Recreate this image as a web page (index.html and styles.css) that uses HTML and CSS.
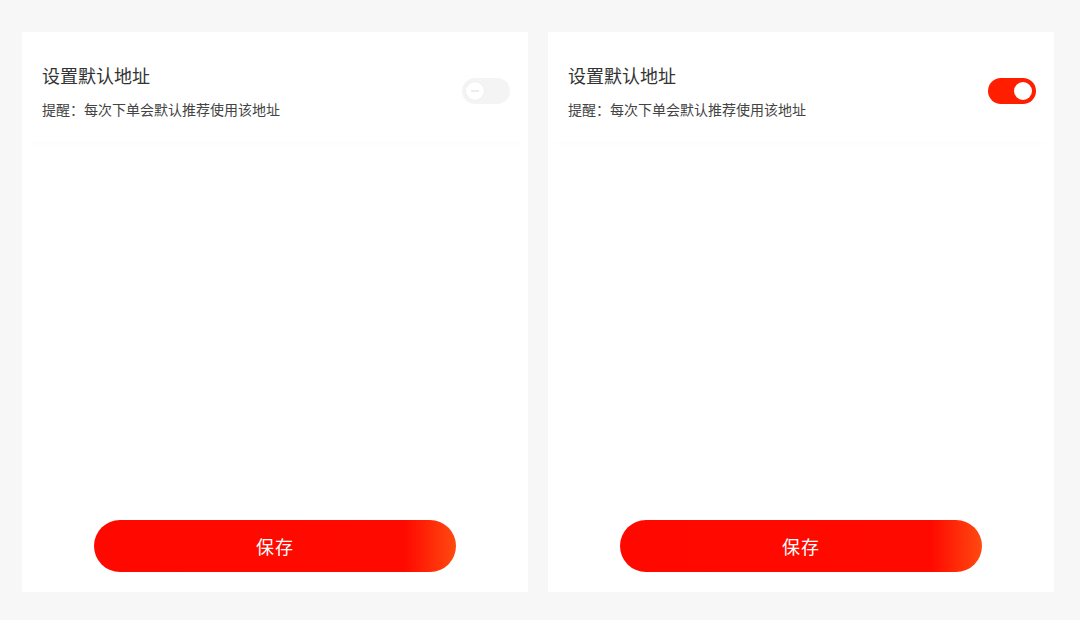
FILE: index.html
```html
<!DOCTYPE html>
<html lang="zh-CN">
<head>
<meta charset="utf-8">
<title>设置默认地址</title>
<link rel="stylesheet" href="styles.css">
</head>
<body>
  <main class="stage">
    <section class="panel">
      <div class="setting">
        <div class="setting-text">
          <h2 class="setting-title">设置默认地址</h2>
          <p class="setting-hint">提醒：每次下单会默认推荐使用该地址</p>
        </div>
        <span class="switch" role="switch" aria-checked="false"><span class="knob"></span></span>
      </div>
      <div class="spacer"></div>
      <div class="actions">
        <button class="save-btn" type="button">保存</button>
      </div>
    </section>
    <section class="panel">
      <div class="setting">
        <div class="setting-text">
          <h2 class="setting-title">设置默认地址</h2>
          <p class="setting-hint">提醒：每次下单会默认推荐使用该地址</p>
        </div>
        <span class="switch is-on" role="switch" aria-checked="true"><span class="knob"></span></span>
      </div>
      <div class="spacer"></div>
      <div class="actions">
        <button class="save-btn" type="button">保存</button>
      </div>
    </section>
  </main>
</body>
</html>
```

FILE: styles.css
```css
* {
  box-sizing: border-box;
}

html,
body {
  margin: 0;
  padding: 0;
  background: #f7f7f7;
  font-family: "Noto Sans CJK SC", "Noto Sans", sans-serif;
}

.stage {
  display: flex;
  gap: 20px;
  padding: 32px 0 0 22px;
  height: 620px;
}

.panel {
  width: 506px;
  height: 560px;
  background: #ffffff;
  display: flex;
  flex-direction: column;
}

.setting {
  display: flex;
  align-items: flex-start;
  justify-content: space-between;
  padding: 30px 18px 0 20px;
  height: 110px;
  box-shadow: 0 6px 8px -6px rgba(0, 0, 0, 0.025);
}

.setting-text {
  display: flex;
  flex-direction: column;
}

.setting-title {
  margin: 0;
  font-size: 18px;
  line-height: 26px;
  font-weight: 400;
  color: #333333;
}

.setting-hint {
  margin: 11px 0 0;
  font-size: 14px;
  line-height: 20px;
  color: #444444;
}

.switch {
  position: relative;
  width: 48px;
  height: 26px;
  margin-top: 16px;
  border-radius: 13px;
  background: #f4f4f4;
  flex: none;
}

.switch .knob {
  position: absolute;
  top: 4px;
  left: 4px;
  width: 18px;
  height: 18px;
  border-radius: 50%;
  background: #ffffff;
  box-shadow: 0 0 0 1px #efefef;
}

.switch .knob::after {
  content: "";
  position: absolute;
  left: 5px;
  top: 8px;
  width: 8px;
  height: 2px;
  background: #ececec;
}

.switch.is-on {
  background: #ff1e00;
}

.switch.is-on .knob {
  left: auto;
  right: 4px;
  box-shadow: none;
}

.switch.is-on .knob::after {
  display: none;
}

.spacer {
  flex: 1;
}

.actions {
  display: flex;
  justify-content: center;
  padding-bottom: 20px;
}

.save-btn {
  width: 362px;
  height: 52px;
  border: none;
  border-radius: 26px;
  background: linear-gradient(90deg, #ff0800 0%, #ff0a00 86%, #ff4a10 100%);
  color: #ffffff;
  font-family: "Noto Sans CJK SC", "Noto Sans", sans-serif;
  font-size: 18px;
  letter-spacing: 1px;
  cursor: pointer;
}
```
